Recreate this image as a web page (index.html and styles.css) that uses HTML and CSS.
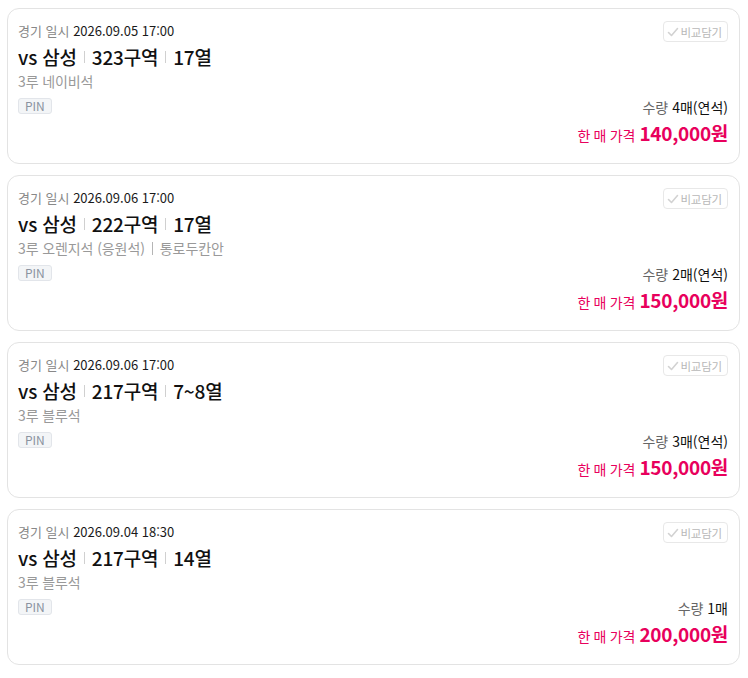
FILE: index.html
```
<!DOCTYPE html>
<html lang="ko">
<head>
<meta charset="utf-8">
<link rel="stylesheet" href="styles.css">
</head>
<body>
<div class="list">
  <div class="card">
    <div class="info">
      <div class="date"><span class="label">경기 일시</span> <span class="val">2026.09.05 17:00</span></div>
      <div class="title">vs 삼성<span class="sep"></span>323구역<span class="sep"></span>17열</div>
      <div class="sub">3루 네이비석</div>
      <span class="pin">PIN</span>
    </div>
    <div class="side">
      <button class="cmp"><svg class="chk" viewBox="0 0 12 12" width="12" height="12"><path d="M1.5 6.5 L4.5 9.5 L10.5 2.5" fill="none" stroke="#d2d2d2" stroke-width="1.6" stroke-linecap="round" stroke-linejoin="round"/></svg>비교담기</button>
      <div class="qty"><span class="ql">수량</span> <span class="qv">4매(연석)</span></div>
      <div class="price"><span class="pl">한 매 가격</span> <span class="pv">140,000원</span></div>
    </div>
  </div>
  <div class="card">
    <div class="info">
      <div class="date"><span class="label">경기 일시</span> <span class="val">2026.09.06 17:00</span></div>
      <div class="title">vs 삼성<span class="sep"></span>222구역<span class="sep"></span>17열</div>
      <div class="sub">3루 오렌지석 (응원석)<span class="sep2"></span>통로두칸안</div>
      <span class="pin">PIN</span>
    </div>
    <div class="side">
      <button class="cmp"><svg class="chk" viewBox="0 0 12 12" width="12" height="12"><path d="M1.5 6.5 L4.5 9.5 L10.5 2.5" fill="none" stroke="#d2d2d2" stroke-width="1.6" stroke-linecap="round" stroke-linejoin="round"/></svg>비교담기</button>
      <div class="qty"><span class="ql">수량</span> <span class="qv">2매(연석)</span></div>
      <div class="price"><span class="pl">한 매 가격</span> <span class="pv">150,000원</span></div>
    </div>
  </div>
  <div class="card">
    <div class="info">
      <div class="date"><span class="label">경기 일시</span> <span class="val">2026.09.06 17:00</span></div>
      <div class="title">vs 삼성<span class="sep"></span>217구역<span class="sep"></span>7~8열</div>
      <div class="sub">3루 블루석</div>
      <span class="pin">PIN</span>
    </div>
    <div class="side">
      <button class="cmp"><svg class="chk" viewBox="0 0 12 12" width="12" height="12"><path d="M1.5 6.5 L4.5 9.5 L10.5 2.5" fill="none" stroke="#d2d2d2" stroke-width="1.6" stroke-linecap="round" stroke-linejoin="round"/></svg>비교담기</button>
      <div class="qty"><span class="ql">수량</span> <span class="qv">3매(연석)</span></div>
      <div class="price"><span class="pl">한 매 가격</span> <span class="pv">150,000원</span></div>
    </div>
  </div>
  <div class="card">
    <div class="info">
      <div class="date"><span class="label">경기 일시</span> <span class="val">2026.09.04 18:30</span></div>
      <div class="title">vs 삼성<span class="sep"></span>217구역<span class="sep"></span>14열</div>
      <div class="sub">3루 블루석</div>
      <span class="pin">PIN</span>
    </div>
    <div class="side">
      <button class="cmp"><svg class="chk" viewBox="0 0 12 12" width="12" height="12"><path d="M1.5 6.5 L4.5 9.5 L10.5 2.5" fill="none" stroke="#d2d2d2" stroke-width="1.6" stroke-linecap="round" stroke-linejoin="round"/></svg>비교담기</button>
      <div class="qty"><span class="ql">수량</span> <span class="qv">1매</span></div>
      <div class="price"><span class="pl">한 매 가격</span> <span class="pv">200,000원</span></div>
    </div>
  </div>
</div>
</body>
</html>
```
FILE: styles.css
```
* { box-sizing: border-box; }
body {
  margin: 0;
  background: #fff;
  font-family: "Noto Sans CJK KR", "Noto Sans", sans-serif;
  color: #111;
}
.list {
  display: flex;
  flex-direction: column;
  gap: 11px;
  padding: 8px 8px 0 7px;
}
.card {
  display: flex;
  justify-content: space-between;
  border: 1px solid #e3e3e3;
  border-radius: 12px;
  height: 156px;
  padding: 13px 11px 15px 10px;
}
.info {
  display: flex;
  flex-direction: column;
  align-items: flex-start;
}
.date {
  font-size: 13px;
  line-height: 18px;
}
.label { color: #888; }
.val { color: #1a1a1a; }
.title {
  margin-top: 4px;
  font-size: 19px;
  line-height: 26px;
  font-weight: 500;
  color: #111;
  display: flex;
  align-items: center;
  letter-spacing: -0.2px;
}
.sep {
  display: inline-block;
  width: 1px;
  height: 12px;
  background: #d0d0d0;
  margin: 0 7px;
}
.sub {
  margin-top: 1px;
  font-size: 14px;
  line-height: 20px;
  color: #999;
  display: flex;
  align-items: center;
  letter-spacing: -0.1px;
}
.sep2 {
  display: inline-block;
  width: 1px;
  height: 13px;
  background: #b5b5b5;
  margin: 0 7px;
}
.pin {
  margin-top: 7px;
  display: inline-flex;
  align-items: center;
  justify-content: center;
  height: 16px;
  padding: 0 6px;
  font-size: 12px;
  line-height: 14px;
  color: #8a93a0;
  background: #f3f5f7;
  border: 1px solid #e2e5ea;
  border-radius: 3px;
}
.side {
  display: flex;
  flex-direction: column;
  align-items: flex-end;
}
.cmp {
  display: inline-flex;
  align-items: center;
  gap: 1px;
  height: 21px;
  padding: 0 5px 0 3px;
  border: 1px solid #e8e8e8;
  border-radius: 4px;
  background: #fff;
  font-family: inherit;
  font-size: 11.5px;
  color: #b8b8b8;
  margin-top: -1px;
  letter-spacing: -0.2px;
}
.chk { display: block; }
.qty {
  margin-top: auto;
  font-size: 14px;
  line-height: 20px;
}
.ql { color: #666; }
.qv { color: #111; }
.price {
  margin-top: 3px;
  line-height: 26px;
  color: #e8005c;
}
.pl { font-size: 14px; letter-spacing: -0.3px; }
.pv { font-size: 19px; font-weight: 700; letter-spacing: -0.3px; }
```
